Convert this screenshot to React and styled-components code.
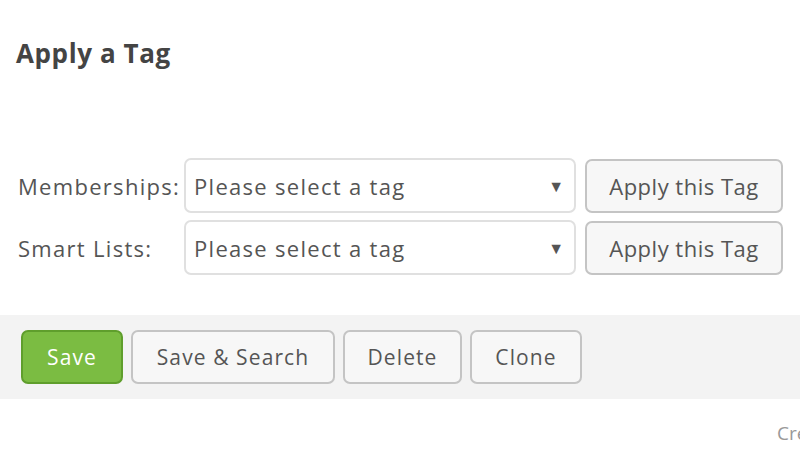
import React from "react";
import styled, { createGlobalStyle } from "styled-components";

const GlobalStyle = createGlobalStyle`
  html, body {
    margin: 0;
    padding: 0;
    background: #fff;
    font-family: "Open Sans", "Lato", sans-serif;
    color: #555;
    overflow: hidden;
  }
`;

const Page = styled.div`
  width: 800px;
  height: 450px;
  display: flex;
  flex-direction: column;
`;

const Title = styled.h2`
  margin: 0;
  padding: 35px 0 0 16px;
  height: 122px;
  box-sizing: border-box;
  font-size: 26px;
  line-height: 36px;
  font-weight: 700;
  letter-spacing: 0.6px;
  color: #444;
`;

const Form = styled.div`
  display: flex;
  flex-direction: column;
  gap: 7px;
  padding-left: 18px;
  margin-top: 36px;
`;

const Row = styled.div`
  display: flex;
  align-items: center;
`;

const Label = styled.label`
  width: 166px;
  font-size: 22px;
  letter-spacing: 1.3px;
  color: #555;
`;

const Select = styled.div`
  width: 392px;
  height: 55px;
  box-sizing: border-box;
  border: 2px solid #e0e0e0;
  border-radius: 7px;
  display: flex;
  align-items: center;
  justify-content: space-between;
  padding: 0 10px 0 8px;
  font-size: 22px;
  letter-spacing: 1.3px;
  color: #555;
`;

const Caret = styled.span`
  font-size: 16px;
  letter-spacing: 0;
  color: #555;
`;

const Button = styled.button`
  font-family: inherit;
  font-size: ${(p) => (p.$large ? "22px" : "21px")};
  letter-spacing: ${(p) => (p.$large ? "0.5px" : "1.1px")};
  width: ${(p) => p.$w}px;
  height: 54px;
  padding: 0;
  box-sizing: border-box;
  border-radius: 7px;
  border: 2px solid ${(p) => (p.$primary ? "#5f9e2c" : "#c4c4c4")};
  background: ${(p) => (p.$primary ? "#7bbc42" : "#f7f7f7")};
  color: ${(p) => (p.$primary ? "#fff" : "#555")};
  cursor: pointer;
`;

const ApplyButton = styled(Button)`
  margin-left: 9px;
`;

const Footer = styled.div`
  margin-top: 40px;
  background: #f3f3f3;
  height: 84px;
  display: flex;
  align-items: center;
  gap: 8px;
  padding-left: 21px;
`;

const Credit = styled.div`
  padding: 21px 0 0 777px;
  font-size: 19px;
  color: #999;
  white-space: nowrap;
  overflow: hidden;
`;

export default function App() {
  return (
    <Page>
      <GlobalStyle />
      <Title>Apply a Tag</Title>
      <Form>
        <Row>
          <Label>Memberships:</Label>
          <Select>
            Please select a tag <Caret>▼</Caret>
          </Select>
          <ApplyButton $large $w={198}>Apply this Tag</ApplyButton>
        </Row>
        <Row>
          <Label>Smart Lists:</Label>
          <Select>
            Please select a tag <Caret>▼</Caret>
          </Select>
          <ApplyButton $large $w={198}>Apply this Tag</ApplyButton>
        </Row>
      </Form>
      <Footer>
        <Button $primary $w={102}>Save</Button>
        <Button $w={204}>Save &amp; Search</Button>
        <Button $w={119}>Delete</Button>
        <Button $w={112}>Clone</Button>
      </Footer>
      <Credit>Created</Credit>
    </Page>
  );
}
